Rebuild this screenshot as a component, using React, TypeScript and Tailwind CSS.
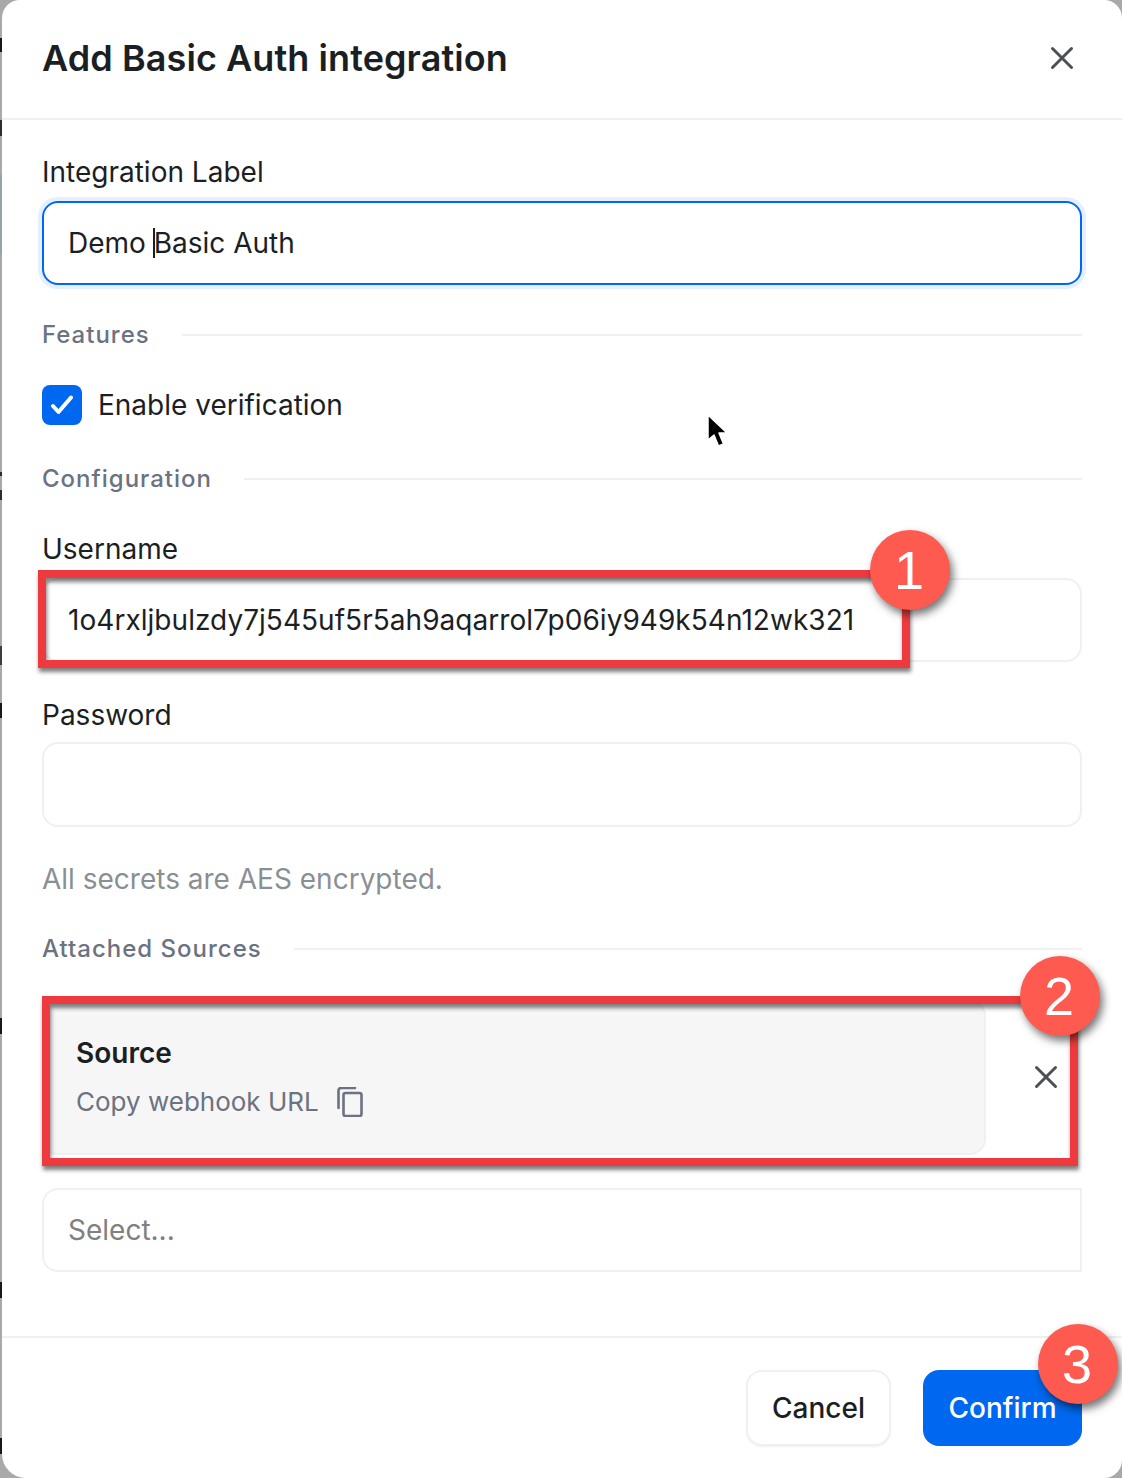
import React from "react";

const font = { fontFamily: "Inter, 'Liberation Sans', sans-serif" };

const edgeMarks = [
  { top: 38, height: 14, color: "#15181d" },
  { top: 120, height: 16, color: "#2a2d33" },
  { top: 175, height: 80, color: "#98a2ad" },
  { top: 472, height: 4, color: "#2a2d33" },
  { top: 490, height: 10, color: "#2a2d33" },
  { top: 646, height: 19, color: "#3a3d43" },
  { top: 703, height: 15, color: "#15181d" },
  { top: 1018, height: 16, color: "#15181d" },
  { top: 1282, height: 16, color: "#15181d" },
  { top: 1438, height: 16, color: "#15181d" },
];

function Divider({ label }: { label: string }) {
  return (
    <div className="flex items-center gap-[32px] h-[32px]">
      <span className="text-[24px] leading-[32px] font-medium tracking-[1px] text-[#6b7280]">{label}</span>
      <div className="flex-1 h-[2px] bg-[#f0f0f0]" />
    </div>
  );
}

function Field({ label, value, mt, box }: { label: string; value?: string; mt: string; box: string }) {
  return (
    <div className={mt}>
      <div className="text-[28px] leading-[34px] text-[#1b1f24]">{label}</div>
      <div className={`${box} rounded-[16px] border-2 border-[#f0f0f0] flex items-center px-[24px] text-[28px] tracking-[0.04px] text-[#1b1f24]`}>
        {value}
      </div>
    </div>
  );
}

function Badge({ n, className }: { n: string; className: string }) {
  return (
    <div
      className={`absolute w-[80px] h-[80px] rounded-full bg-[#ff5a4f] text-white text-[54px] pr-[2px] flex items-center justify-center shadow-[3px_5px_8px_rgba(0,0,0,0.55)] ${className}`}
      style={{ fontFamily: "'Liberation Sans', sans-serif" }}
    >
      {n}
    </div>
  );
}

function Cross() {
  return (
    <svg width="24" height="24" viewBox="0 0 24 24" fill="none" stroke="#4b5058" strokeWidth="3" strokeLinecap="round">
      <path d="M2.5 2.5 L21.5 21.5 M21.5 2.5 L2.5 21.5" />
    </svg>
  );
}

export default function App() {
  return (
    <div className="relative w-[1122px] h-[1478px] overflow-hidden bg-[#a9a9a9]" style={font}>
      {edgeMarks.map((m) => (
        <div
          key={m.top}
          className="absolute left-0 w-[2px]"
          style={{ top: m.top, height: m.height, backgroundColor: m.color }}
        />
      ))}

      <div className="ml-[2px] h-full bg-white rounded-[18px] rounded-bl-[24px] flex flex-col">
        <div className="h-[120px] shrink-0 border-b-2 border-[#f0f0f0] pb-[2px] flex items-center justify-between pl-[40px] pr-[48px]">
          <h1 className="text-[36px] leading-[44px] font-semibold tracking-[0.08px] text-[#1b1f24]">Add Basic Auth integration</h1>
          <Cross />
        </div>

        <div className="flex-1 pl-[40px] pr-[40px] pt-[35px]">
          <div className="text-[28px] leading-[34px] text-[#1b1f24]">Integration Label</div>
          <div className="mt-[12px] h-[84px] rounded-[16px] border-2 border-[#0068f0] shadow-[0_0_0_4px_#e6effd] flex items-center pl-[24px] text-[28px] text-[#1b1f24]">
            <span>Demo&nbsp;</span>
            <span className="w-[2px] h-[30px] bg-[#1b1f24] -ml-[1px] -mr-[1px]" />
            <span>Basic Auth</span>
          </div>

          <div className="mt-[34px]">
            <Divider label="Features" />
          </div>

          <div className="mt-[34px] flex items-center gap-[16px] h-[40px]">
            <div className="w-[40px] h-[40px] rounded-[8px] bg-[#0068f0] flex items-center justify-center">
              <svg width="24" height="20" viewBox="0 0 24 20" fill="none" stroke="white" strokeWidth="4" strokeLinecap="round" strokeLinejoin="round">
                <path d="M3 11 L8.5 17 L21 2.5" />
              </svg>
            </div>
            <span className="text-[28px] text-[#1b1f24]">Enable verification</span>
          </div>

          <div className="mt-[38px]">
            <Divider label="Configuration" />
          </div>

          <Field label="Username" value="1o4rxljbulzdy7j545uf5r5ah9aqarrol7p06iy949k54n12wk321" mt="mt-[37px]" box="mt-[12px] h-[84px]" />
          <Field label="Password" mt="mt-[36px]" box="mt-[10px] h-[85px]" />

          <div className="mt-[35px] text-[28px] leading-[34px] text-[#8a8f96]">All secrets are AES encrypted.</div>

          <div className="mt-[37px]">
            <Divider label="Attached Sources" />
          </div>

          <div className="mt-[35px] flex items-stretch h-[155px]">
            <div className="w-[944px] rounded-[16px] bg-[#f6f6f6] border-2 border-[#f0f0f0] pl-[32px] pt-[34px]">
              <div className="text-[28px] leading-[34px] font-semibold text-[#1b1f24]">Source</div>
              <div className="mt-[15px] flex items-center gap-[18px]">
                <span className="text-[26px] leading-[34px] text-[#6b7280]">Copy webhook URL</span>
                <svg width="26" height="30" viewBox="0 0 26 30" fill="none" stroke="#6b7280" strokeWidth="2.6" strokeLinejoin="round" strokeLinecap="round">
                  <rect x="6.5" y="6" width="18" height="23" rx="2" />
                  <path d="M1.5 21 V3.5 A2.5 2.5 0 0 1 4 1 H18" />
                </svg>
              </div>
            </div>
            <div className="flex-1 flex items-center justify-center pl-[24px] pb-[2px]">
              <Cross />
            </div>
          </div>

          <div className="mt-[33px] h-[84px] rounded-l-[16px] border-2 border-[#f0f0f0] flex items-center px-[24px] text-[28px] text-[#808080]">
            Select...
          </div>
        </div>

        <div className="h-[142px] shrink-0 border-t-2 border-[#f0f0f0] flex justify-end items-start gap-[32px] pr-[40px] pt-[32px]">
          <div className="w-[145px] h-[76px] rounded-[16px] border-2 border-[#f0f0f0] bg-white shadow-[0_1px_2px_rgba(0,0,0,0.06)] flex items-center justify-center text-[28px] font-medium text-[#1b1f24]">
            Cancel
          </div>
          <div className="w-[159px] h-[76px] rounded-[16px] bg-[#0068f0] flex items-center justify-center text-[28px] font-medium text-white">
            Confirm
          </div>
        </div>
      </div>

      {/* Annotations drawn over the screenshot */}
      <div className="absolute left-[38px] top-[570px] w-[872px] h-[98px] border-[8px] border-[#ee3a3e] shadow-[1px_4px_4px_rgba(0,0,0,0.5),inset_1px_4px_4px_rgba(0,0,0,0.5)]" />
      <div className="absolute left-[42px] top-[996px] w-[1036px] h-[170px] border-[8px] border-[#ee3a3e] shadow-[1px_4px_4px_rgba(0,0,0,0.5),inset_1px_4px_4px_rgba(0,0,0,0.5)]" />
      <Badge n="1" className="left-[870px] top-[530px]" />
      <Badge n="2" className="left-[1020px] top-[956px]" />
      <Badge n="3" className="left-[1038px] top-[1324px]" />

      <svg className="absolute left-[702px] top-[412px]" width="32" height="42" viewBox="0 0 32 42">
        <path d="M6 3 L6 28 L12 23 L16.5 34 L21.5 32 L17 21 L25 21 Z" fill="black" stroke="white" strokeWidth="1.5" strokeLinejoin="round" />
      </svg>
    </div>
  );
}
